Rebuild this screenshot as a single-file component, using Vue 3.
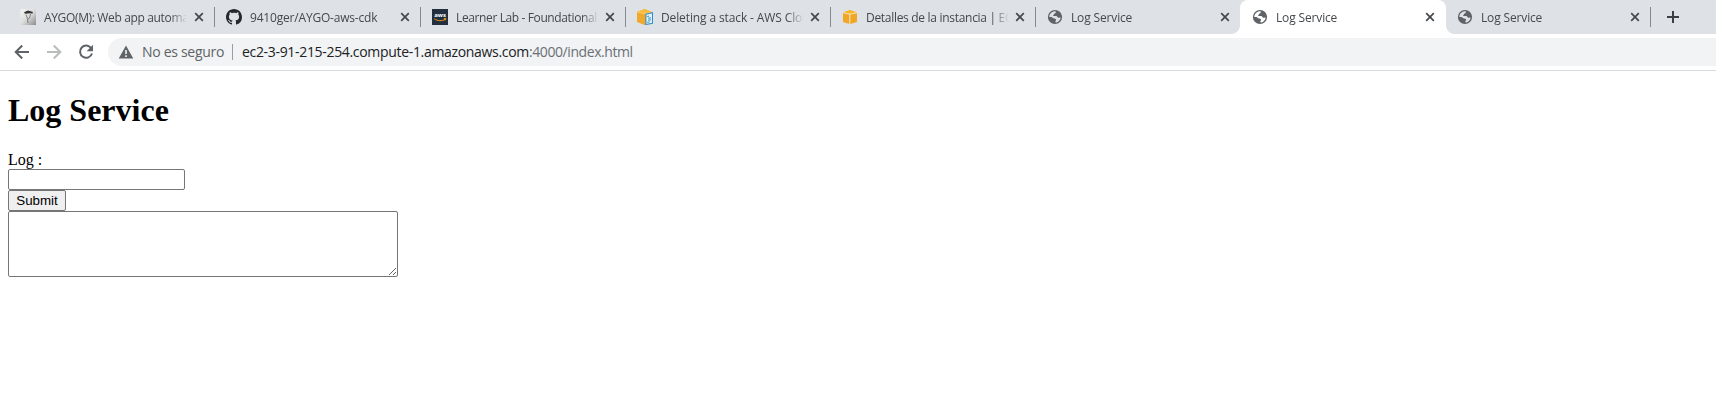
<script setup>
const tabs = [
  { icon: 'crest', title: 'AYGO(M): Web app automation', spacing: -0.35, wide: true },
  { icon: 'github', title: '9410ger/AYGO-aws-cdk', spacing: -0.19, wide: true },
  { icon: 'aws', title: 'Learner Lab - Foundational Services', spacing: -0.38 },
  { icon: 'stack', title: 'Deleting a stack - AWS CloudFormation', spacing: -0.12 },
  { icon: 'cube', title: 'Detalles de la instancia | EC2', spacing: -0.3 },
  { icon: 'globe', title: 'Log Service', spacing: -0.15 },
  { icon: 'globe', title: 'Log Service', spacing: -0.15, active: true },
  { icon: 'globe', title: 'Log Service', spacing: -0.15 },
]
</script>

<template>
  <div class="browser">
    <div class="strip">
      <div v-for="(tab, i) in tabs" :key="i" class="tab" :class="{ active: tab.active, wide: tab.wide, plain: i === 5 || i === 6 }">
        <svg v-if="tab.icon === 'crest'" class="fav" viewBox="0 0 16 16">
          <defs>
            <linearGradient id="crest-bg" x1="0" y1="0" x2="1" y2="1">
              <stop offset="0" stop-color="#f6f6f6" />
              <stop offset=".5" stop-color="#dcdcdc" />
              <stop offset="1" stop-color="#8c8c8c" />
            </linearGradient>
          </defs>
          <path d="M1 0h15v16H0V6z" fill="url(#crest-bg)" />
          <path d="M4 3.200l4-1.800L13 3l-.8 1.800-1.400-.6-2.800.4-3 .2z" fill="#333" />
          <path d="M6 5.500l1.300 3.700L8 14M10.500 5l-1 4L8 10" fill="none" stroke="#777" stroke-width=".9" />
        </svg>
        <svg v-else-if="tab.icon === 'github'" class="fav" viewBox="0 0 16 16">
          <path fill="#24292e" d="M8 0C3.58 0 0 3.58 0 8c0 3.54 2.29 6.53 5.47 7.59.4.07.55-.17.55-.38 0-.19-.01-.82-.01-1.49-2.01.37-2.53-.49-2.69-.94-.09-.23-.48-.94-.82-1.13-.28-.15-.68-.52-.01-.53.63-.01 1.08.58 1.23.82.72 1.21 1.87.87 2.33.66.07-.52.28-.87.51-1.07-1.78-.2-3.64-.89-3.64-3.95 0-.87.31-1.59.82-2.15-.08-.2-.36-1.02.08-2.12 0 0 .67-.21 2.2.82.64-.18 1.32-.27 2-.27s1.36.09 2 .27c1.53-1.04 2.2-.82 2.2-.82.44 1.1.16 1.92.08 2.12.51.56.82 1.27.82 2.15 0 3.07-1.87 3.75-3.65 3.95.29.25.54.73.54 1.48 0 1.07-.01 1.93-.01 2.2 0 .21.15.46.55.38A8.01 8.01 0 0 0 16 8c0-4.42-3.58-8-8-8z" />
        </svg>
        <svg v-else-if="tab.icon === 'aws'" class="fav" viewBox="0 0 16 16">
          <rect width="16" height="16" fill="#232f3e" />
          <text x="8" y="8.4" class="aws-word" text-anchor="middle">aws</text>
          <path d="M2.200 9.800c3.500 2.400 8 2.400 11 .5M12 9.500l1.900.1-.6 1.800" fill="none" stroke="#f09a1c" stroke-width="1" />
        </svg>
        <svg v-else-if="tab.icon === 'stack'" class="fav" viewBox="0 0 16 16">
          <path d="M0 3L7.500 0 15 3v9.500L7.500 16 0 13z" fill="#f0a92a" />
          <path d="M0 3l7.500 1.700L15 3 7.500 0z" fill="#f8bd3c" />
          <path d="M0 3l7.500 1.800L15 3" fill="none" stroke="#fbdc94" stroke-width=".6" />
          <path d="M8.900 5.300L15.500 3.800v10.500l-6.600 1.200z" fill="#e8f5fc" stroke="#2f8fc8" stroke-width="1.100" />
          <path d="M10.200 7.500l2-.4M11 9.300l3-.5M11 11.200l3-.4M10.200 13.300l2.600-.4" stroke="#2f8fc8" stroke-width="1" />
        </svg>
        <svg v-else-if="tab.icon === 'cube'" class="fav" viewBox="0 0 16 16">
          <path d="M1 4l6.400 1.500V15L1 13z" fill="#efa725" />
          <path d="M15 4L8.200 5.500V15L15 13z" fill="#efa725" />
          <path d="M1 3.200L8 1l7 2.200-7 1.600z" fill="#f8b41c" />
          <path d="M1 3.600l6.800 1.600L15 3.600M7.800 5.200V15" fill="none" stroke="#fbe0a0" stroke-width=".7" />
        </svg>
        <svg v-else class="fav" viewBox="0 0 16 16">
          <circle cx="8" cy="8" r="7.100" fill="#5f6368" />
          <path class="land" d="M8.600 2.300C9 3.500 8.800 4.300 7.600 4.600c-.9.200-.5 1.200-1.100 1.500-.7.300-.7.900.2 1h2.600c1 .1.900 1.500 1.900 1.600l2.400-.1c-.1 2.300-1.700 4.300-4.100 5-1.100-.1-1.300-.8-1.100-1.600.5-.6 1-.9.600-1.600-.5-.7-1.500-.3-2.200-.8L4.500 8H2.300c.1-3 2.500-5.700 6.300-5.700z" />
        </svg>
        <span class="title" :style="{ letterSpacing: tab.spacing + 'px' }">{{ tab.title }}</span>
        <svg class="close" viewBox="0 0 10 10"><path d="M1.200 1.200l7.600 7.600M8.800 1.200L1.200 8.800" /></svg>
      </div>
      <svg class="plus" viewBox="0 0 12 12"><path d="M6 0v12M0 6h12" /></svg>
    </div>

    <div class="toolbar">
      <svg class="nav" viewBox="0 0 16 16"><path d="M15 8H2M8.200 1.500L1.700 8l6.500 6.500" /></svg>
      <svg class="nav off" viewBox="0 0 16 16"><path d="M1 8h13M7.800 1.500L14.300 8l-6.500 6.500" /></svg>
      <svg class="nav" viewBox="0 0 16 16">
        <path d="M13.200 4.200A6.100 6.100 0 1 0 14 9.500" />
        <path class="head" d="M15 .8v6.400H8.600z" />
      </svg>
      <div class="omnibox">
        <svg class="warn" viewBox="0 0 16 14">
          <path d="M8 .5L15.300 13.500H.7z" fill="#5f6368" />
          <path d="M8 5v4M8 10.300v1.700" stroke="#f1f3f4" stroke-width="1.600" />
        </svg>
        <span class="insecure">No es seguro</span>
        <span class="bar"></span>
        <span class="url">ec2-3-91-215-254.compute-1.amazonaws.com<span class="path">:4000/index.html</span></span>
      </div>
    </div>

    <main class="page">
      <h1>Log Service</h1>
      <form @submit.prevent>
        <label for="log">Log :</label>
        <input id="log" type="text" />
        <button type="submit">Submit</button>
      </form>
      <textarea></textarea>
    </main>
  </div>
</template>

<style>
body { margin: 0; background: #fff; overflow: hidden; }
</style>

<style scoped>
.browser { height: 402px; background: #fff; overflow: hidden; }
.strip { display: flex; align-items: center; height: 34px; padding-left: 9px; background: #dee1e6; }
.tab {
  position: relative; box-sizing: border-box; flex: none; display: flex; align-items: center;
  width: 205px; height: 34px; padding: 0 11px;
  font: 12px "Open Sans", "Noto Sans", sans-serif; color: #45494d;
}
.tab.wide { width: 206px; }
.tab:not(.plain)::after { content: ""; position: absolute; right: 0; top: 7px; width: 1px; height: 20px; background: #85888d; }
.tab.active { width: 206px; margin-left: -1px; padding-left: 12px; background: #fff; border-radius: 8px 8px 0 0; }
.tab.active::before, .tab.active::after { content: ""; position: absolute; bottom: 0; width: 8px; height: 8px; }
.tab.active::before { left: -8px; background: radial-gradient(circle at 0 0, transparent 7.500px, #fff 8px); }
.tab.active::after { right: -8px; background: radial-gradient(circle at 100% 0, transparent 7.500px, #fff 8px); }
.fav { flex: none; width: 16px; height: 16px; }
.land { fill: #dee1e6; }
.active .land { fill: #fff; }
.aws-word { font: bold 6px "Open Sans", sans-serif; fill: #fff; }
.title {
  width: 143px; margin-left: 8px; padding-top: 1px; overflow: hidden; white-space: nowrap; line-height: 18px;
  -webkit-mask-image: linear-gradient(90deg, #000 126px, transparent 143px);
  mask-image: linear-gradient(90deg, #000 126px, transparent 143px);
}
.close { flex: none; width: 10px; height: 10px; margin-left: auto; }
.close path { fill: none; stroke: #45494d; stroke-width: 1.700; }
.plus { width: 12px; height: 12px; margin-left: 16px; }
.plus path { fill: none; stroke: #3c4043; stroke-width: 2; }
.toolbar { box-sizing: border-box; display: flex; align-items: center; height: 37px; padding: 0 0 1px 14px; border-bottom: 1px solid #d8dadd; }
.nav { flex: none; width: 16px; height: 16px; margin-right: 16px; fill: none; stroke: #5f6368; stroke-width: 2; }
.nav.off { stroke: #babcbe; }
.nav .head { fill: #5f6368; stroke: none; }
.omnibox {
  flex: 1; display: flex; align-items: center; height: 28px; margin-left: -2px; padding-left: 10px;
  border-radius: 14px 0 0 14px; background: #f1f3f4; font: 14px "Open Sans", "Noto Sans", sans-serif; white-space: nowrap;
}
.warn { width: 16px; height: 14px; }
.insecure { width: 82px; margin-left: 8px; color: #5f6368; letter-spacing: -.3px; }
.bar { width: 1px; height: 16px; margin: 0 9px 0 8px; background: #9a9da1; }
.url { color: #202124; letter-spacing: -.32px; }
.path { color: #6b6f74; letter-spacing: -.42px; }
.page { display: flow-root; padding: 0 8px; font: 16px "Liberation Serif", serif; color: #000; }
h1 { margin: 21px 0 22px; font-size: 32px; line-height: 37px; }
form { display: flex; flex-direction: column; align-items: flex-start; }
label { height: 18px; line-height: 18px; }
input, textarea { display: block; box-sizing: border-box; margin: 0; border: 1px solid #767676; border-radius: 2px; background: #fff; }
input { width: 177px; height: 21px; }
button {
  box-sizing: border-box; width: 58px; height: 21px; margin: 0; padding: 0; border: 1px solid #767676;
  border-radius: 2px; background: #efefef; color: #000; font: 13.333px "Liberation Sans", Arial, sans-serif;
}
textarea { width: 390px; height: 66px; resize: both; }
</style>
